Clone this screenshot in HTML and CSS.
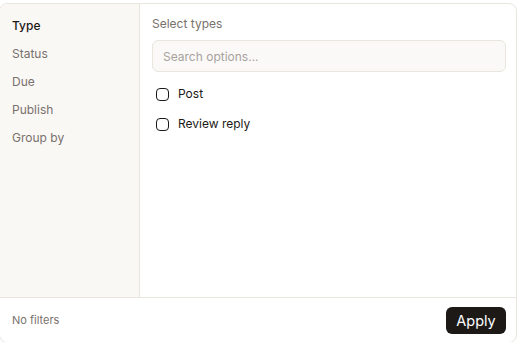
FILE: index.html
```html
<!DOCTYPE html>
<html>
<head>
<meta charset="utf-8">
<link rel="stylesheet" href="styles.css">
</head>
<body>
<div class="panel">
  <div class="body">
    <nav class="side">
      <div class="side-item active">Type</div>
      <div class="side-item">Status</div>
      <div class="side-item">Due</div>
      <div class="side-item">Publish</div>
      <div class="side-item">Group by</div>
    </nav>
    <section class="main">
      <div class="label">Select types</div>
      <div class="search">Search options...</div>
      <label class="opt"><span class="box"></span>Post</label>
      <label class="opt"><span class="box"></span>Review reply</label>
    </section>
  </div>
  <footer class="foot">
    <span class="status">No filters</span>
    <button class="apply">Apply</button>
  </footer>
</div>
</body>
</html>
```

FILE: styles.css
```css
* { box-sizing: border-box; }
html, body { margin: 0; padding: 0; background: #fff; }
body { font-family: Inter, "Noto Sans", sans-serif; color: #1c1917; overflow: hidden; }
.panel {
  margin: 3px 0 0 -1px;
  width: 518px;
  height: 340px;
  border: 1px solid #e9e5df;
  border-radius: 8px;
  display: flex;
  flex-direction: column;
  overflow: hidden;
  background: #fff;
}
.body { flex: 1; display: flex; min-height: 0; }
.side {
  width: 140px;
  background: #faf8f5;
  border-right: 1px solid #e9e5df;
  padding: 14px 0 0 12px;
  display: flex;
  flex-direction: column;
}
.side-item {
  font-size: 12px;
  line-height: 16px;
  height: 28px;
  color: #78716c;
}
.side-item.active { color: #1c1917; font-weight: 500; }
.main { flex: 1; padding: 12px 10px 0 12px; display: flex; flex-direction: column; }
.label { font-size: 12px; line-height: 16px; color: #78716c; margin-bottom: 8px; }
.search {
  height: 32px;
  border: 1px solid #e9e5df;
  border-radius: 6px;
  background: #faf9f7;
  font-size: 12px;
  color: #a8a29e;
  padding: 0 10px;
  display: flex;
  align-items: center;
  margin-bottom: 14px;
}
.opt {
  display: flex;
  align-items: center;
  font-size: 12px;
  line-height: 16px;
  color: #1c1917;
  height: 16px;
  margin: 0 0 14px 4px;
}
.box {
  width: 13px;
  height: 13px;
  border: 1.3px solid #1c1917;
  border-radius: 4px;
  margin-right: 9px;
  flex: none;
}
.foot {
  height: 45px;
  border-top: 1px solid #e9e5df;
  display: flex;
  align-items: center;
  justify-content: space-between;
  padding: 0 10px 0 12px;
}
.status { font-size: 11px; color: #78716c; }
.apply {
  font-family: Inter, "Noto Sans", sans-serif;
  background: #1c1917;
  color: #fff;
  border: 0;
  border-radius: 6px;
  font-size: 14.5px;
  height: 27px;
  width: 60px;
  padding: 0;
  margin-top: 0;
}
```
